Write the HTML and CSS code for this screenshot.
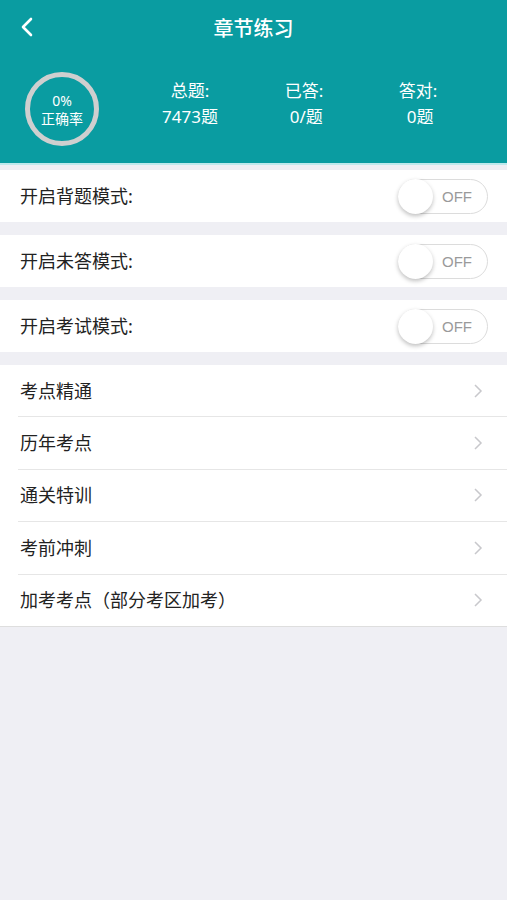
FILE: index.html
```html
<!DOCTYPE html>
<html lang="zh-CN">
<head>
    <meta charset="UTF-8">
    <meta name="viewport" content="width=device-width, initial-scale=1.0">
    <title>章节练习</title>
    <link rel="stylesheet" href="styles.css">
</head>
<body>
    <header class="top">
        <div class="navbar">
            <a class="back" href="#">
                <svg width="14" height="20" viewBox="0 0 14 20"><path d="M11 2 L3 10 L11 18" fill="none" stroke="#fff" stroke-width="2.6" stroke-linecap="round" stroke-linejoin="round"/></svg>
            </a>
            <h1>章节练习</h1>
        </div>
        <div class="summary">
            <div class="rate">
                <span class="rate-num">0%</span>
                <span class="rate-label">正确率</span>
            </div>
            <div class="stats">
                <div class="stat"><span>总题:</span><span>7473题</span></div>
                <div class="stat"><span>已答:</span><span>&nbsp;0/题</span></div>
                <div class="stat"><span>答对:</span><span>&nbsp;0题</span></div>
            </div>
        </div>
    </header>

    <div class="content">
        <div class="switch-row">
            <span class="label">开启背题模式:</span>
            <div class="toggle"><span class="knob"></span><span class="off">OFF</span></div>
        </div>
        <div class="switch-row">
            <span class="label">开启未答模式:</span>
            <div class="toggle"><span class="knob"></span><span class="off">OFF</span></div>
        </div>
        <div class="switch-row">
            <span class="label">开启考试模式:</span>
            <div class="toggle"><span class="knob"></span><span class="off">OFF</span></div>
        </div>

        <ul class="menu">
            <li><span class="label">考点精通</span><svg class="arrow" width="10" height="16" viewBox="0 0 10 16"><path d="M2 2 L8 8 L2 14" fill="none" stroke="#c8c8cc" stroke-width="1.5"/></svg></li>
            <li><span class="label">历年考点</span><svg class="arrow" width="10" height="16" viewBox="0 0 10 16"><path d="M2 2 L8 8 L2 14" fill="none" stroke="#c8c8cc" stroke-width="1.5"/></svg></li>
            <li><span class="label">通关特训</span><svg class="arrow" width="10" height="16" viewBox="0 0 10 16"><path d="M2 2 L8 8 L2 14" fill="none" stroke="#c8c8cc" stroke-width="1.5"/></svg></li>
            <li><span class="label">考前冲刺</span><svg class="arrow" width="10" height="16" viewBox="0 0 10 16"><path d="M2 2 L8 8 L2 14" fill="none" stroke="#c8c8cc" stroke-width="1.5"/></svg></li>
            <li><span class="label">加考考点（部分考区加考）</span><svg class="arrow" width="10" height="16" viewBox="0 0 10 16"><path d="M2 2 L8 8 L2 14" fill="none" stroke="#c8c8cc" stroke-width="1.5"/></svg></li>
        </ul>
    </div>
</body>
</html>
```

FILE: styles.css
```css
body {
    font-family: "Noto Sans", "Noto Sans CJK SC", sans-serif;
    margin: 0;
    padding: 0;
    background-color: #efeff4;
    color: #222;
}

.top {
    background-color: #0a9ca1;
    color: #fff;
    height: 163px;
    border-bottom: 2px solid #bfe9ec;
}

.navbar {
    height: 55px;
    display: flex;
    align-items: center;
    justify-content: center;
    position: relative;
}

.navbar h1 {
    margin: 0;
    font-size: 20px;
    font-weight: 500;
}

.back {
    position: absolute;
    left: 20px;
    top: 17px;
    display: flex;
}

.summary {
    display: flex;
    align-items: center;
    padding: 17px 0 0 25px;
}

.rate {
    width: 64px;
    height: 64px;
    border: 5px solid #cfcfcf;
    border-radius: 50%;
    display: flex;
    flex-direction: column;
    align-items: center;
    justify-content: center;
    gap: 1px;
    font-size: 14px;
    line-height: 17px;
}

.rate-num {
    font-size: 14px;
}

.stats {
    display: grid;
    grid-template-columns: repeat(3, 114px);
    margin-left: 34px;
    margin-top: -10px;
}

.stat {
    display: flex;
    flex-direction: column;
    align-items: center;
    font-size: 17px;
    line-height: 26px;
}

.content {
    padding-top: 5px;
}

.switch-row {
    background-color: #fff;
    height: 52px;
    display: flex;
    align-items: center;
    justify-content: space-between;
    padding: 0 19px 0 20px;
    margin-bottom: 13px;
}

.label {
    font-size: 18px;
    margin-top: -2px;
}

.toggle {
    width: 90px;
    height: 35px;
    border: 1px solid #dcdcdc;
    border-radius: 18px;
    position: relative;
    display: flex;
    align-items: center;
    justify-content: flex-end;
    padding-right: 15px;
    box-sizing: border-box;
}

.knob {
    position: absolute;
    left: -1px;
    top: -1px;
    width: 35px;
    height: 35px;
    border-radius: 50%;
    background-color: #fff;
    box-shadow: 0 2px 4px rgba(0, 0, 0, 0.25);
}

.off {
    font-size: 15px;
    color: #9a9a9a;
    font-family: "Liberation Sans", sans-serif;
}

.menu {
    list-style: none;
    margin: 0;
    padding: 0 0 0 18px;
    background-color: #fff;
    border-bottom: 1px solid #dedede;
}

.menu li {
    height: 51.4px;
    display: flex;
    align-items: center;
    justify-content: space-between;
    padding: 0 24px 0 2px;
    border-bottom: 1px solid #e6e6e6;
}

.menu li:last-child {
    border-bottom: none;
}
```
